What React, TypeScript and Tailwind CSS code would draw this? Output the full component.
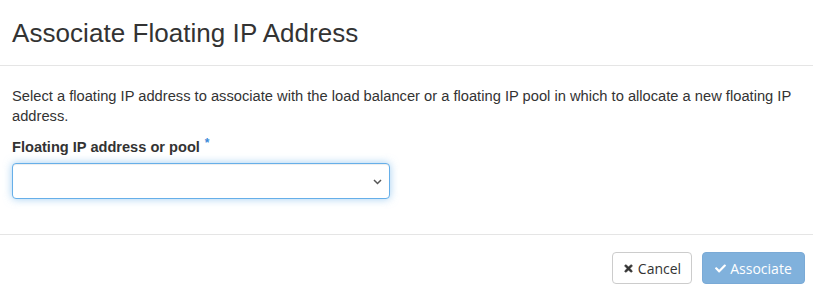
import React from "react";
import { FaTimes, FaCheck } from "react-icons/fa";

export default function App() {
  return (
    <div className="w-[813px] h-[296px] bg-white text-[#333] overflow-hidden" style={{ fontFamily: "'Liberation Sans', Arial, sans-serif" }}>
      <div className="h-[66px] border-b border-[#e5e5e5] px-3 flex items-center">
        <h4 className="text-[26px] leading-[28px] text-[#333] font-normal pt-[1px] tracking-[0.05px]" style={{ fontFamily: "'Liberation Sans', Arial, sans-serif" }}>
          Associate Floating IP Address
        </h4>
      </div>
      <div className="px-3 pt-[20px] pb-[35px]">
        <p className="text-[14.7px] leading-[20px] mb-[11px]">
          Select a floating IP address to associate with the load balancer or a floating IP pool in which to allocate a new floating IP address.
        </p>
        <label className="block text-[14.6px] leading-[20px] font-bold mb-[6px]">
          Floating IP address or pool
          <span className="text-[#3b8ad8] text-[12px] align-top relative top-[-4px] ml-[5px]">*</span>
        </label>
        <div className="w-[378px] h-[36px] rounded-[4px] border border-[#66afe9] bg-white flex items-center justify-end pr-[7px] shadow-[inset_0_1px_1px_rgba(0,0,0,0.075),0_0_8px_rgba(102,175,233,0.6)]">
          <svg width="9" height="6" viewBox="0 0 9 6" className="mt-[1px]">
            <path d="M1 1 L4.5 4.5 L8 1" fill="none" stroke="#555" strokeWidth="1.5" />
          </svg>
        </div>
      </div>
      <div className="border-t border-[#e5e5e5] pt-[17px] pr-[8px] flex justify-end gap-[10px]" style={{ fontFamily: "'Open Sans', sans-serif" }}>
        <button className="h-[32px] w-[80px] rounded-[4px] border border-[#ccc] bg-white text-[#333] text-[14px] flex items-center justify-center gap-[4px]">
          <FaTimes className="w-[11px] h-[11px] stroke-[30]" />
          Cancel
        </button>
        <button className="h-[32px] w-[103px] rounded-[4px] border border-[#7aaad6] bg-[#80b1dc] text-white text-[14px] flex items-center justify-center gap-[4px]">
          <FaCheck className="w-[11px] h-[11px]" />
          Associate
        </button>
      </div>
    </div>
  );
}
